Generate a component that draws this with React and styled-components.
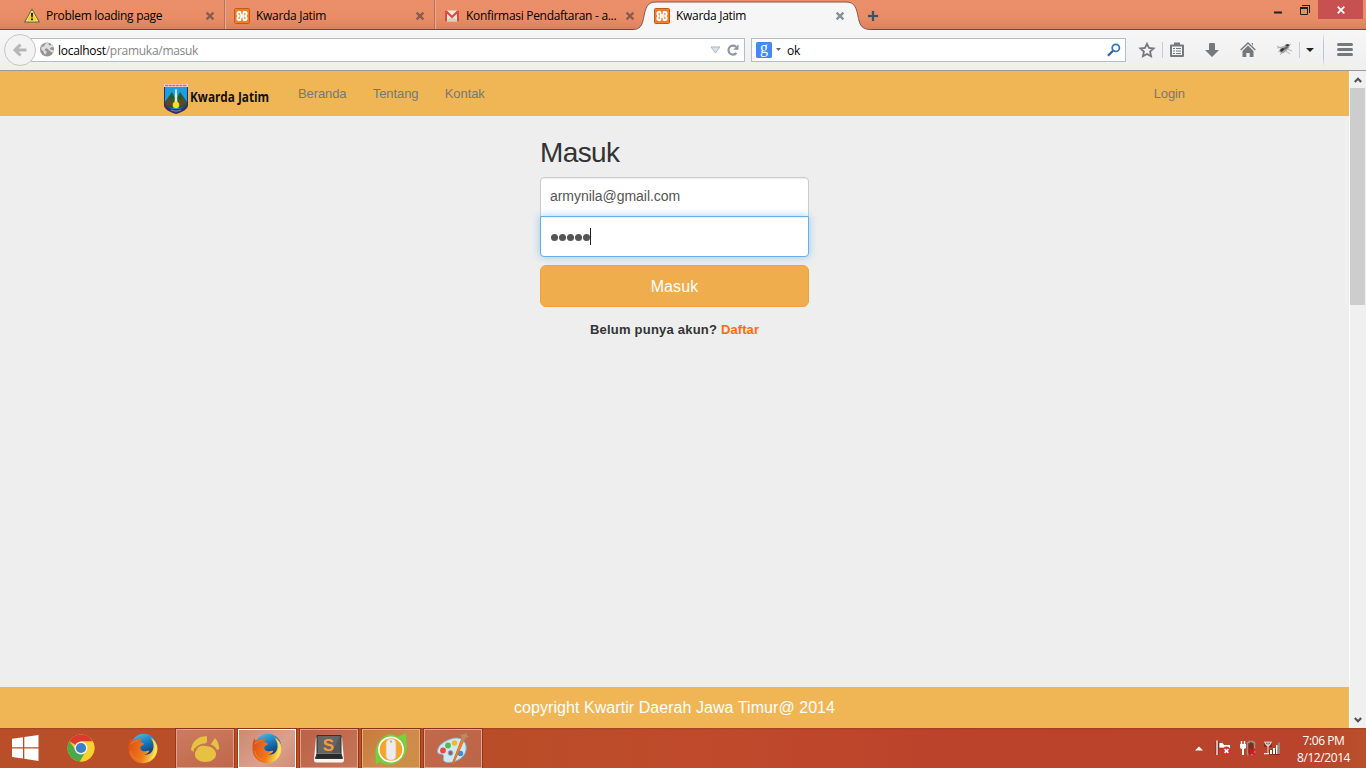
import React from "react";
import styled, { createGlobalStyle, css } from "styled-components";

const uiFont = `"Open Sans", "Noto Sans", sans-serif`;
const pageFont = `"Liberation Sans", Arial, sans-serif`;

const GlobalStyle = createGlobalStyle`
  * { box-sizing: border-box; }
  html, body { margin: 0; padding: 0; overflow: hidden; }
  svg { display: block; flex: none; overflow: visible; }
`;

const Screen = styled.div`
  width: 1366px;
  height: 768px;
  display: flex;
  flex-direction: column;
  overflow: hidden;
  background: #eee;
`;

/* ---------- browser chrome ---------- */

const TabStrip = styled.header`
  height: 30px;
  flex: none;
  display: flex;
  padding-left: 16px;
  position: relative;
  background: linear-gradient(#ea8f69 0, #e98d67 18px, #da815f 29px);
  border-bottom: 1px solid #6d4a44;
`;

const Tab = styled.div`
  position: relative;
  width: 210px;
  height: 29px;
  display: flex;
  align-items: center;
  gap: 6px;
  padding: 3px 11px 0 8px;
  ${(p) =>
    p.$divider &&
    css`
      border-right: 1px solid #eda88b;
      padding-right: 10px;
      box-shadow: inset -1px 0 0 #b9725a;
    `}
`;

const ActiveShape = styled.svg`
  position: absolute;
  left: -13px;
  top: 0;
`;

const TabTitle = styled.span`
  position: relative;
  flex: 1;
  white-space: nowrap;
  font: 12px/16px ${uiFont};
  letter-spacing: -0.3px;
  color: #000;
`;

const IconSlot = styled.span`
  position: relative;
  display: flex;
  flex: none;
`;

const NewTab = styled.div`
  padding: 10px 0 0 11px;
`;

const WindowButtons = styled.div`
  display: flex;
  margin-left: auto;
  padding-right: 3px;
  height: 19px;
`;

const WinButton = styled.div`
  width: ${(p) => p.$w}px;
  height: 19px;
  display: flex;
  align-items: center;
  justify-content: center;
  background: ${(p) => p.$bg || "transparent"};
`;

const Toolbar = styled.div`
  height: 41px;
  flex: none;
  display: flex;
  align-items: center;
  padding: 0 0 1px 4px;
  background: linear-gradient(#f6f6f6, #efefef);
  border-bottom: 1px solid #9b9b9b;
`;

const BackButton = styled.div`
  position: relative;
  z-index: 1;
  flex: none;
  width: 32px;
  height: 32px;
  margin-right: -5px;
  border: 1px solid #c6c6c6;
  border-radius: 50%;
  background: #f3f3f3;
  display: flex;
  align-items: center;
  justify-content: center;
`;

const Field = styled.div`
  width: ${(p) => p.$w}px;
  flex: none;
  height: 24px;
  display: flex;
  align-items: center;
  background: #fff;
  border: 1px solid #b3bdc8;
  padding: ${(p) => p.$pad};
`;

const FieldText = styled.span`
  flex: 1;
  white-space: nowrap;
  font: 12px/16px ${uiFont};
  letter-spacing: -0.28px;
  color: #000;
  padding: 2px 0 0 ${(p) => p.$gap}px;
  em {
    font-style: normal;
    color: #858585;
  }
`;

const Tool = styled.div`
  width: ${(p) => p.$w}px;
  height: 32px;
  flex: none;
  display: flex;
  align-items: center;
  justify-content: center;
  padding-left: ${(p) => p.$shift || 0}px;
`;

const ToolRule = styled.div`
  width: 1px;
  flex: none;
  height: ${(p) => p.$h}px;
  background: ${(p) => p.$bg || "#c5ccd3"};
`;

/* ---------- web page ---------- */

const Viewport = styled.div`
  height: 657px;
  flex: none;
  display: flex;
`;

const Page = styled.div`
  width: 1349px;
  display: flex;
  flex-direction: column;
  background: #eee;
  font-family: ${pageFont};
`;

const Navbar = styled.nav`
  height: 45px;
  flex: none;
  display: flex;
  padding: 0 164px;
  background: #f0b656;
`;

const Brand = styled.div`
  display: flex;
  width: 134px;
  padding-top: 13px;
  gap: 2px;
`;

const BrandText = styled.span`
  font: 700 14px/26px ${uiFont};
  color: #111;
  white-space: nowrap;
  transform: scaleX(0.84);
  transform-origin: left;
`;

const NavLink = styled.a`
  font-size: 13px;
  line-height: 45px;
  letter-spacing: -0.1px;
  color: #777;
  margin-right: 26.4px;
  &:last-child {
    margin: 0 0 0 auto;
  }
`;

const Main = styled.main`
  flex: 1;
  display: flex;
  flex-direction: column;
  align-items: center;
`;

const LoginForm = styled.form`
  width: 269px;
  display: flex;
  flex-direction: column;
  padding-top: 20px;
`;

const Title = styled.h2`
  margin: 0 0 8px;
  font-size: 28px;
  font-weight: 400;
  line-height: 33px;
  letter-spacing: -0.6px;
  color: #333;
`;

const Input = styled.div`
  height: ${(p) => (p.$focus ? 41 : 40)}px;
  display: flex;
  align-items: center;
  padding: 0 9px ${(p) => (p.$focus ? 0 : 2)}px;
  background: #fff;
  border: 1px solid #ccc;
  border-radius: 4px 4px 0 0;
  box-shadow: inset 0 1px 1px rgba(0, 0, 0, 0.075);
  font-size: 14px;
  letter-spacing: -0.04px;
  color: #555;
  ${(p) =>
    p.$focus &&
    css`
      position: relative;
      margin-top: -1px;
      border-color: #66afe9;
      border-radius: 0 0 4px 4px;
      box-shadow: inset 0 1px 1px rgba(0, 0, 0, 0.075), 0 0 8px rgba(102, 175, 233, 0.6);
    `}
`;

const Dots = styled.span`
  display: flex;
  gap: 1px;
  padding: 1px 0 0 1px;
`;

const Dot = styled.i`
  width: 7px;
  height: 7px;
  border-radius: 50%;
  background: #555;
`;

const Caret = styled.i`
  width: 1px;
  height: 17px;
  background: #222;
`;

const Submit = styled.button`
  height: 42px;
  margin: 8px 0 0;
  padding: 1px 0 0;
  border: 1px solid #eea236;
  border-radius: 6px;
  background: #f0ad4e;
  color: #fff;
  font: 16px/39px ${pageFont};
  letter-spacing: 0.1px;
`;

const SignUp = styled.p`
  margin: 15px 0 0;
  font-size: 13px;
  font-weight: 700;
  line-height: 16px;
  text-align: center;
  white-space: nowrap;
  color: #333;
  letter-spacing: 0.22px;
  a {
    color: #ff6c0a;
    letter-spacing: 0.08px;
  }
`;

const Footer = styled.footer`
  height: 41px;
  flex: none;
  background: #f0b656;
  color: #fff;
  text-align: center;
  font-size: 16px;
  line-height: 41px;
  letter-spacing: 0.06px;
`;

const Scrollbar = styled.div`
  width: 17px;
  display: flex;
  flex-direction: column;
  align-items: center;
  background: #f0f0f0;
  border-left: 1px solid #fff;
`;

const ScrollArrow = styled.div`
  height: 17px;
  width: 100%;
  display: flex;
  align-items: center;
  justify-content: center;
`;

const Thumb = styled.div`
  height: 217px;
  width: 15px;
  margin: 0 1px auto 0;
  background: #cdcdcd;
`;

/* ---------- taskbar ---------- */

const Taskbar = styled.div`
  height: 40px;
  flex: none;
  display: flex;
  background: linear-gradient(rgba(90, 25, 5, 0.25) 0, transparent 2px),
    linear-gradient(90deg, #b94f29 0, #b94d28 480px, #bf4a2b 720px, #bb422b 960px, #b9432b 1300px, #b9502b 1366px);
`;

const StartButton = styled.div`
  width: 50px;
  display: flex;
  align-items: center;
  padding-left: 12px;
`;

const TaskSlot = styled.div`
  width: 62px;
  padding: 0 2px;
  display: flex;
`;

const TaskButton = styled.div`
  flex: 1;
  height: 40px;
  display: flex;
  align-items: center;
  justify-content: center;
  ${(p) =>
    p.$bg &&
    css`
      height: 39px;
      margin-top: 1px;
      background: ${p.$bg};
      border: 1px solid ${p.$edge || "#e0a48e"};
      box-shadow: 0 0 0 1px rgba(110, 30, 5, 0.45);
    `}
`;

const Tray = styled.div`
  margin-left: auto;
  display: flex;
  align-items: center;
  padding-right: 16px;
`;

const TrayItem = styled.div`
  width: ${(p) => p.$w}px;
  display: flex;
`;

const Clock = styled.div`
  width: 54px;
  display: flex;
  flex-direction: column;
  align-items: center;
  padding: 2px 0 0 1px;
  font: 12px/17px ${uiFont};
  letter-spacing: -0.42px;
  white-space: nowrap;
  color: #fff;
`;

/* ---------- icons ---------- */

const WarningIcon = () => (
  <svg width="16" height="16" viewBox="0 0 16 16">
    <path d="M8 1.2 15.3 14H.7z" fill="#f3d21c" stroke="#77724f" strokeWidth="1.3" strokeLinejoin="round" />
    <path d="M8 3 13.6 13H2.4z" fill="none" stroke="#fff3a0" strokeWidth=".7" />
    <path d="M7 5h2l-.4 4.6H7.4zM7.1 10.6h1.8v1.7H7.1z" fill="#111" />
  </svg>
);

const XamppIcon = () => (
  <svg width="16" height="16" viewBox="0 0 16 16">
    <rect x=".5" y=".5" width="15" height="15" rx="1" fill="#f47b2a" stroke="#c45a13" />
    <path
      d="M4 3h2.500L8 4.500 9.500 3H12l1.500 1.500v2.300L12.600 8l.9 1.200v2.300L12 13H9.500L8 11.500 6.500 13H4l-1.500-1.500V9.200L3.400 8l-.9-1.200V4.500z"
      fill="#fff"
    />
    <path d="M7.400 3h1.200v3.300H7.400zM7.400 9.700h1.200V13H7.400z" fill="#f47b2a" />
    <path d="M4.500 5h1.300v1.500l1 .9H5.600L4.500 6.500zM11.500 5h-1.300v1.500l-1 .9h1.200l1.100-.9zM4.500 11h1.300V9.500l1-.9H5.600l-1.100.9zM11.500 11h-1.300V9.500l-1-.9h1.200l1.100.9z" fill="#f2904f" />
  </svg>
);

const GmailIcon = () => (
  <svg width="16" height="16" viewBox="0 0 16 16">
    <path d="M1 2.500h14v11H1z" fill="#eee9dc" />
    <path d="m2 13 6-5 6 5z" fill="#d5d0c2" />
    <path d="M1 2.500h1.800L8 7.400l5.200-4.900H15v11h-2V5.700l-5 4.600-5-4.600v7.800H1z" fill="#db4a3d" />
  </svg>
);

const CloseIcon = ({ color }) => (
  <svg width="10" height="10" viewBox="0 0 10 10">
    <path d="m1.600 1.600 6.800 6.800m0-6.800L1.600 8.400" stroke={color} strokeWidth="2.300" />
  </svg>
);

const Globe = () => (
  <svg width="15" height="15" viewBox="0 0 15 15">
    <circle cx="7" cy="7.500" r="7" fill="#949494" />
    <path d="M6.500 1 9 1.500 8.300 3l1.900.5L11.700 2l2 3.400-2.200-.4-1.700 1.500 1 1.300 2.900.5-.8 2.400-2-.9L8.700 8 7 6.300 4.800 7l.1 1.400 1.800 1-.4 2-1.500 1.300-1.200-3L1.200 7.500 1.500 5l2.300-.6 1.200-2z" fill="#dedede" />
  </svg>
);

const ReloadIcon = () => (
  <svg width="12" height="12" viewBox="0 0 12 12">
    <path d="M9.400 9A4.500 4.500 0 1 1 9 2.800" fill="none" stroke="#8996a3" strokeWidth="2.100" />
    <path d="M11.500.3v5.400H6.200z" fill="#8996a3" />
  </svg>
);

const SearchIcon = () => (
  <svg width="14" height="14" viewBox="0 0 14 14">
    <path d="M6 7.700 1 12.700" stroke="#2b5fa0" strokeWidth="2.200" />
    <circle cx="8.800" cy="4.900" r="3.600" fill="#fff" stroke="#2f77b8" strokeWidth="1.700" />
  </svg>
);

const GoogleIcon = () => (
  <svg width="16" height="16" viewBox="0 0 16 16">
    <rect width="16" height="16" rx="1.500" fill="#4587f4" />
    <text x="8" y="10.900" textAnchor="middle" fontFamily="Liberation Serif" fontSize="16" fill="#fff">
      g
    </text>
  </svg>
);

const FlyIcon = () => (
  <svg width="17" height="15" viewBox="0 0 17 15">
    <path d="m1 6 5-1 4 1 5-4M2 10l4-2m-2 5 3-4m3 0 4 3m-3-5 5 2M1 4l4 2" stroke="#a5a5a5" strokeWidth=".8" fill="none" />
    <path d="m3 8 3-3 5-3 3 1-1 3-5 5-3 .5z" fill="#a7a7a7" />
    <path d="m9 3 3-1 1.500 1-2 1.500zM4 8l2.500-2L9 6.500 7 9l-2 1z" fill="#353535" />
    <path d="m8 6 3-2 1.500 1L9 8z" fill="#666" />
  </svg>
);

const Crest = () => (
  <svg width="24" height="30" viewBox="0 0 24 30">
    <path d="M0 2h24v19c0 4-5 7-12 9C5 28 0 25 0 21z" fill="#30296d" />
    <path d="M1 3h22v18c-3 4-7 5-11 5S4 25 1 21z" fill="#1a9fe0" />
    <path d="M1 18 8 8l3 6 1-1 1 1 3-6 7 10v4c-6 3-16 3-22 0z" fill="#245b2c" />
    <path d="m2 18 3-4 3 3 2-3-1 7H2zm12-3 3 1 2-3 3 6-6 3z" fill="#5f482a" />
    <path d="M11.300 5h1.400l.8 14h-3z" fill="#e9e7cc" />
    <path d="M1 20c3 4 7 5 11 5s8-1 11-5c0 5-5 7-11 9C6 27 1 25 1 20z" fill="#352d7a" />
    <circle cx="12" cy="21" r="3.300" fill="#f1df20" />
    <path d="M7 26c4 1.500 6 1.500 10 0" stroke="#8a84a8" fill="none" />
    <path d="M0 0h24v3H0z" fill="#f4d8d0" />
    <path d="M1 1.500h22" stroke="#e0645c" strokeWidth="1.300" strokeDasharray="3 .6" />
  </svg>
);

const Chrome = () => (
  <svg width="28" height="28" viewBox="0 0 28 28">
    <circle cx="14" cy="14" r="13.500" fill="#f6c72b" />
    <path d="M14 14 2.300 7.200A13.500 13.500 0 0 1 25.700 7.500H14z" fill="#dc3a2d" />
    <path d="M2.300 7.200A13.500 13.500 0 0 0 13 27.500l5.500-10L14 14 8 15z" fill="#48ab48" />
    <path d="M25.700 7.500H14l5.500 9-6.500 11A13.500 13.500 0 0 0 25.700 7.500z" fill="#f8d02f" />
    <circle cx="14" cy="14" r="6.500" fill="#f3f4f2" />
    <circle cx="14" cy="14" r="5.100" fill="#3d7fc9" />
  </svg>
);

const Firefox = ({ id }) => (
  <svg width="30" height="31" viewBox="0 0 30 31">
    <defs>
      <linearGradient id={`${id}-sea`} x1="0" y1="0" x2=".4" y2="1">
        <stop offset="0" stopColor="#55c5ef" />
        <stop offset=".5" stopColor="#1677bd" />
        <stop offset="1" stopColor="#092b68" />
      </linearGradient>
      <linearGradient id={`${id}-fur`} x1="0" y1="0" x2="1" y2=".3">
        <stop offset="0" stopColor="#d94a17" />
        <stop offset=".65" stopColor="#f07c1c" />
        <stop offset="1" stopColor="#fbdc50" />
      </linearGradient>
    </defs>
    <circle cx="16" cy="14" r="13.300" fill={`url(#${id}-sea)`} />
    <path
      d="M2.500 5c.3 1.700 1 2.500 1.700 3 1.500-1.600 4-2.200 6-1.600L13 4.500l-.5 4.200c1.500 1 2.800 1.300 3.500 1.800-.4 2-3 1.800-3.600 3.400-.4 1.800.5 3.400 2.600 4.200 2.400.8 4.500-1 6.500-.3-1 2.400-3.200 3.700-5.800 3.500 5 1.400 9.500-2 9.800-7.300.2-4-1.300-7.200-3.500-9.700C27 6.500 29.700 11 29.500 16c-.4 8-6.500 14-14.300 14.200C7 30.200.7 24.500.5 16.500.3 12 1 7.500 2.500 5z"
      fill={`url(#${id}-fur)`}
    />
    <path d="M23.500 4.500c4 4 5.300 9 4.500 13.500-.8 4-3 7-5.500 8.500 3-4 4.500-8 4-13-.3-3.500-1.500-6.500-3-9z" fill="#fbe465" />
    <path d="M3 11c1.500-2 4-3.500 7-3.500M2.500 18c1 5 5 8.500 10 9.500" stroke="#f2792c" strokeWidth="1.200" fill="none" />
  </svg>
);

const Paw = () => (
  <svg width="30" height="28" viewBox="0 0 30 28">
    <path d="M4 13.500h7L17 7V1.300C10 .5 2 5 1 15l3 2z" fill="#e7c142" />
    <path d="M20 10.500 25 3c2.500 2.500 4.200 6.500 4.200 11l-3.200 1.500c-1-2.500-3-4-6-5z" fill="#e7c142" />
    <path d="M5 18.500c.8-5 5.500-7.500 10.500-7.500S25.500 14 26 18.500C26.500 24 21 27 15.500 27S4 23.500 5 18.500z" fill="#e7c142" />
    <path d="M4 16c2-5 8-7 13-6.500l3 .5c3 1 5.500 3 6.500 6" stroke="#c47354" strokeWidth="1.600" fill="none" />
  </svg>
);

const Sublime = () => (
  <svg width="32" height="30" viewBox="0 0 32 30">
    <path d="M3 3.500h26l2 22c.1 2-.7 3-2 3H3c-1.300 0-2.100-1-2-3z" fill="#f5f5f5" />
    <path d="M4 1.500h24v18H4z" fill="#555" />
    <path d="M4 19.500h24l1.500 5h-27z" fill="#292929" />
    <path d="M5 2h22l-9 18H4.500z" fill="#707070" opacity=".6" />
    <path d="M4 1.500h24v18l1.500 5h-27l1.500-5z" fill="none" stroke="#333" />
    <path d="M4.500 19.500h23" stroke="#777" strokeWidth=".8" />
    <text x="15.500" y="17" textAnchor="middle" fontFamily="Liberation Sans" fontWeight="700" fontSize="17" fill="#f79a43">
      S
    </text>
  </svg>
);

const Mouse = () => (
  <svg width="34" height="32" viewBox="0 0 34 32">
    <path d="M23 4 32 0l.5 9c2 9-3 18-11 21.500C14 33 8 31 6 29l-4 2.500L1.500 23C.500 12 7 3 15 1.500c3-.6 6 .5 8 2.500z" fill="#77cf3b" />
    <circle cx="17" cy="16.500" r="13" fill="#fff" />
    <circle cx="17" cy="16.500" r="11.300" fill="#f5a526" />
    <rect x="12.200" y="6" width="9.600" height="21" rx="4.300" fill="#ececef" stroke="#d8d3d0" strokeWidth=".7" />
    <path d="M17 7.500v2" stroke="#888" strokeWidth="1.200" />
  </svg>
);

const Palette = () => (
  <svg width="34" height="32" viewBox="0 0 34 32">
    <path
      d="M15 6c8-3 14 1 15 7 .8 6-2 11-8 14s-11 3-13.500 1.500S8.500 24 7 22 2 22.500 1.500 18.500C1.500 13 7 8.500 15 6z"
      fill="#cfe8f5"
      stroke="#7fb4d2"
    />
    <circle cx="14.500" cy="20" r="2.400" fill="#8d5f57" stroke="#7fb4d2" />
    <circle cx="7" cy="17.500" r="2.900" fill="#e94b3b" />
    <circle cx="12" cy="12.500" r="2.900" fill="#58b84a" />
    <circle cx="18.500" cy="10" r="2.800" fill="#f3b92a" />
    <circle cx="24.500" cy="20.500" r="2.700" fill="#3f8fd3" />
    <path d="m17.500 30.500-1-.5L25 7.500l2.300 1z" fill="#f0872a" stroke="#d9701f" strokeWidth="1" />
    <path d="m24.800 7.500 1.200-3L24 1.500c3 .5 4-.5 6.500-1.500-.5 2 1 2.500 3 3.500-2 .3-3.500 1-4.200 2l-1.800 3z" fill="#b98b62" />
  </svg>
);

const FlagIcon = () => (
  <svg width="16" height="16" viewBox="0 0 16 16">
    <path d="M1 1v14" stroke="#4c150c" strokeWidth="3" opacity=".5" />
    <path d="M1 .5v14.500" stroke="#fff" strokeWidth="1.300" />
    <path d="M3 2.500h3.500l1.500 2h6.500v5H9L7.500 8H3z" fill="#fff" stroke="#63281c" strokeWidth=".6" />
    <circle cx="10.500" cy="11" r="4.400" fill="#e12a2a" />
    <path d="m8.600 9.100 3.800 3.800m0-3.800-3.800 3.800" stroke="#fff" strokeWidth="1.600" />
  </svg>
);

const PowerIcon = () => (
  <svg width="16" height="16" viewBox="0 0 16 16">
    <path d="M7.500 14.500V2.500h1.500v-1h4v1h1.500v12z" fill="#7f2d20" stroke="#a78c86" strokeWidth="1.500" />
    <path d="M1.500 1v3.500M4.500 1v3.500" stroke="#fff" strokeWidth="1.400" />
    <path d="M0 4h6v4L4 9v6H2V9L0 8z" fill="#fff" />
    <path d="m9 9 6 6m0-6-6 6" stroke="#e0151c" strokeWidth="2" />
  </svg>
);

const SignalIcon = () => (
  <svg width="16" height="14" viewBox="0 0 16 14">
    <path d="M0 0h8v6H5v7H3V6H0zM4 9h12v5H4z" fill="#5a1e13" opacity=".55" />
    <path d="M0 1.200h8M1 2l3 3.500L7 2M4 1v12" stroke="#e5cfc9" strokeWidth="1.200" fill="none" />
    <path d="M0 12h5v1.200H0zM6 9h2v4H6zm3-2h2v6H9zm3-3h1.500v9H12z" fill="#fff" />
    <path d="M14 1.500h2V13h-2z" fill="#9c8580" />
  </svg>
);

const Triangle = ({ w, h, color, stroke }) => (
  <svg width={w} height={h} viewBox="0 0 10 6" preserveAspectRatio="none">
    <path d="M0 0h10L5 6z" fill={color} stroke={stroke} />
  </svg>
);

const tabs = [
  { title: "Problem loading page", icon: <WarningIcon />, divider: true },
  { title: "Kwarda Jatim", icon: <XamppIcon />, divider: true },
  { title: "Konfirmasi Pendaftaran - a...", icon: <GmailIcon /> },
  { title: "Kwarda Jatim", icon: <XamppIcon />, active: true },
];

const tasks = [
  { id: "chrome", icon: <Chrome /> },
  { id: "firefox", icon: <Firefox id="pin" /> },
  { id: "paw", icon: <Paw />, bg: "linear-gradient(160deg,#cb7c60,#c0674a)" },
  { id: "firefox-open", icon: <Firefox id="run" />, bg: "linear-gradient(135deg,#cb8a74,#dba18d 60%,#cf8b75)", edge: "#fff" },
  { id: "sublime", icon: <Sublime />, bg: "linear-gradient(135deg,#bb6248,#c67559)" },
  { id: "mouse", icon: <Mouse />, bg: "linear-gradient(135deg,#c57b3c,#d08a4c 55%,#cc8f47)", edge: "#e6ae79" },
  { id: "paint", icon: <Palette />, bg: "linear-gradient(135deg,#c2684c,#bd6547)" },
];

export default function App() {
  return (
    <Screen>
      <GlobalStyle />
      <TabStrip>
        {tabs.map((t, i) => (
          <Tab key={i} $divider={t.divider}>
            {t.active && (
              <ActiveShape width="238" height="31" viewBox="0 0 238 31">
                <path
                  d="M0 29.500c7 0 9-4 10.500-11C12.500 8 14 2 23 2h190c9 0 10.500 6 12.500 16.500 1.500 7 3.500 11 12.500 11V31H0z"
                  fill="#f6f6f6"
                />
                <path
                  d="M0 29.500c7 0 9-4 10.500-11C12.500 8 14 2 23 2h190c9 0 10.500 6 12.500 16.500 1.500 7 3.500 11 12.500 11"
                  fill="none"
                  stroke="#8b5546"
                />
              </ActiveShape>
            )}
            <IconSlot>{t.icon}</IconSlot>
            <TabTitle>{t.title}</TabTitle>
            <IconSlot>
              <CloseIcon color={t.active ? "#87919b" : "#8a5c50"} />
            </IconSlot>
          </Tab>
        ))}
        <NewTab>
          <svg width="12" height="12" viewBox="0 0 12 12">
            <path d="M6 .500v11M.5 6h11" stroke="#c98570" strokeWidth="4" />
            <path d="M6 1v10M1 6h10" stroke="#41505d" strokeWidth="2" />
          </svg>
        </NewTab>
        <WindowButtons>
          <WinButton $w={26}>
            <svg width="8" height="12" viewBox="0 0 8 12">
              <path d="M0 7.500h8v2H0z" fill="#222" />
            </svg>
          </WinButton>
          <WinButton $w={27}>
            <svg width="10" height="10" viewBox="0 0 10 10">
              <path d="M.5 2.500h7v7h-7z" fill="none" stroke="#222" />
              <path d="M0 2h8v2H0zM2 0h8v8H9V1H2z" fill="#222" />
            </svg>
          </WinButton>
          <WinButton $w={45} $bg="#c75050">
            <svg width="8" height="8" viewBox="0 0 8 8">
              <path d="m.7.7 6.600 6.600m0-6.600L.7 7.300" stroke="#fff" strokeWidth="1.700" />
            </svg>
          </WinButton>
        </WindowButtons>
      </TabStrip>

      <Toolbar>
        <BackButton>
          <svg width="14" height="14" viewBox="0 0 14 14">
            <path d="M13.500 7H3M7.500 1.500 2 7l5.500 5.500" fill="none" stroke="#b6b6b6" strokeWidth="3" />
          </svg>
        </BackButton>
        <Field $w={714} $pad="0 5px 0 8px">
          <Globe />
          <FieldText $gap={3}>
            localhost<em>/pramuka/masuk</em>
          </FieldText>
          <Triangle w={9} h={6} color="#dbe2ea" stroke="#aab4bf" />
          <Tool $w={7} />
          <ReloadIcon />
        </Field>
        <Tool $w={6} />
        <Field $w={375} $pad="0 4px">
          <GoogleIcon />
          <Tool $w={12}>
            <Triangle w={5} h={3} color="#666" />
          </Tool>
          <FieldText $gap={3}>ok</FieldText>
          <SearchIcon />
        </Field>
        <Tool $w={36} $shift={6}>
          <svg width="16" height="16" viewBox="0 0 16 16">
            <path
              d="m8 1.800 2 4.200 4.600.5-3.500 3.100 1 4.700L8 12l-4.100 2.300 1-4.700L1.400 6.500 6 6z"
              fill="none"
              stroke="#74797e"
              strokeWidth="1.800"
            />
          </svg>
        </Tool>
        <ToolRule $h={16} />
        <Tool $w={28}>
          <svg width="14" height="15" viewBox="0 0 14 15">
            <path d="M1 3.500h12V14H1z" fill="#f4f4f4" stroke="#74797e" strokeWidth="2" strokeLinejoin="round" />
            <path d="M4 .5h6V4H4z" fill="#74797e" />
            <path d="M3 6.500h2m1 0h5M3 9h2m1 0h5M3 11.500h2m1 0h5" stroke="#74797e" strokeWidth="1.200" />
          </svg>
        </Tool>
        <Tool $w={42}>
          <svg width="14" height="14" viewBox="0 0 14 14">
            <path d="M4 1q0-1 1-1h4q1 0 1 1v6h4l-7 7-7-7h4z" fill="#74797e" />
          </svg>
        </Tool>
        <Tool $w={30}>
          <svg width="16" height="15" viewBox="0 0 16 15">
            <path d="M.7 8 8 1l7.300 7" fill="none" stroke="#74797e" strokeWidth="1.500" />
            <path d="M8 3.500 13.500 9v6H9.700v-4H6.300v4H2.500V9zM11.500 1H13v3z" fill="#74797e" />
          </svg>
        </Tool>
        <Tool $w={36} $shift={6}>
          <FlyIcon />
        </Tool>
        <ToolRule $h={16} />
        <Tool $w={19}>
          <Triangle w={8} h={4} color="#222" />
        </Tool>
        <Tool $w={4} />
        <ToolRule $h={36} $bg="linear-gradient(transparent,#bcc6d0 30%,#bcc6d0 70%,transparent)" />
        <Tool $w={42}>
          <svg width="16" height="13" viewBox="0 0 16 13">
            <path d="M1.500 1.500h13m-13 5h13m-13 5h13" stroke="#74797e" strokeWidth="3" strokeLinecap="round" />
          </svg>
        </Tool>
      </Toolbar>

      <Viewport>
        <Page>
          <Navbar>
            <Brand>
              <Crest />
              <BrandText>Kwarda Jatim</BrandText>
            </Brand>
            <NavLink>Beranda</NavLink>
            <NavLink>Tentang</NavLink>
            <NavLink>Kontak</NavLink>
            <NavLink>Login</NavLink>
          </Navbar>
          <Main>
            <LoginForm>
              <Title>Masuk</Title>
              <Input>armynila@gmail.com</Input>
              <Input $focus>
                <Dots>
                  <Dot />
                  <Dot />
                  <Dot />
                  <Dot />
                  <Dot />
                </Dots>
                <Caret />
              </Input>
              <Submit type="button">Masuk</Submit>
              <SignUp>
                Belum punya akun? <a>Daftar</a>
              </SignUp>
            </LoginForm>
          </Main>
          <Footer>copyright Kwartir Daerah Jawa Timur@ 2014</Footer>
        </Page>
        <Scrollbar>
          <ScrollArrow>
            <svg width="8" height="6" viewBox="0 0 8 6">
              <path d="m.8 5 3.200-3.300L7.200 5" fill="none" stroke="#505050" strokeWidth="2" />
            </svg>
          </ScrollArrow>
          <Thumb />
          <ScrollArrow>
            <svg width="8" height="6" viewBox="0 0 8 6">
              <path d="M.8 1 4 4.300 7.200 1" fill="none" stroke="#505050" strokeWidth="2" />
            </svg>
          </ScrollArrow>
        </Scrollbar>
      </Viewport>

      <Taskbar>
        <StartButton>
          <svg width="27" height="26" viewBox="0 0 27 26">
            <path d="M0 3.700 11 2.200v10H0zM12.300 2 26.500 0v12.200H12.300zM0 13.500h11v10L0 22zM12.300 13.500h14.200V26l-14.200-2.200z" fill="#fff" />
          </svg>
        </StartButton>
        {tasks.map((t) => (
          <TaskSlot key={t.id}>
            <TaskButton $bg={t.bg} $edge={t.edge}>
              {t.icon}
            </TaskButton>
          </TaskSlot>
        ))}
        <Tray>
          <TrayItem $w={21}>
            <svg width="8" height="5" viewBox="0 0 8 5">
              <path d="M0 4.500 4 .500l4 4z" fill="#fff" />
            </svg>
          </TrayItem>
          <TrayItem $w={24}>
            <FlagIcon />
          </TrayItem>
          <TrayItem $w={24}>
            <PowerIcon />
          </TrayItem>
          <TrayItem $w={32}>
            <SignalIcon />
          </TrayItem>
          <Clock>
            <span>7:06 PM</span>
            <span>8/12/2014</span>
          </Clock>
        </Tray>
      </Taskbar>
    </Screen>
  );
}
